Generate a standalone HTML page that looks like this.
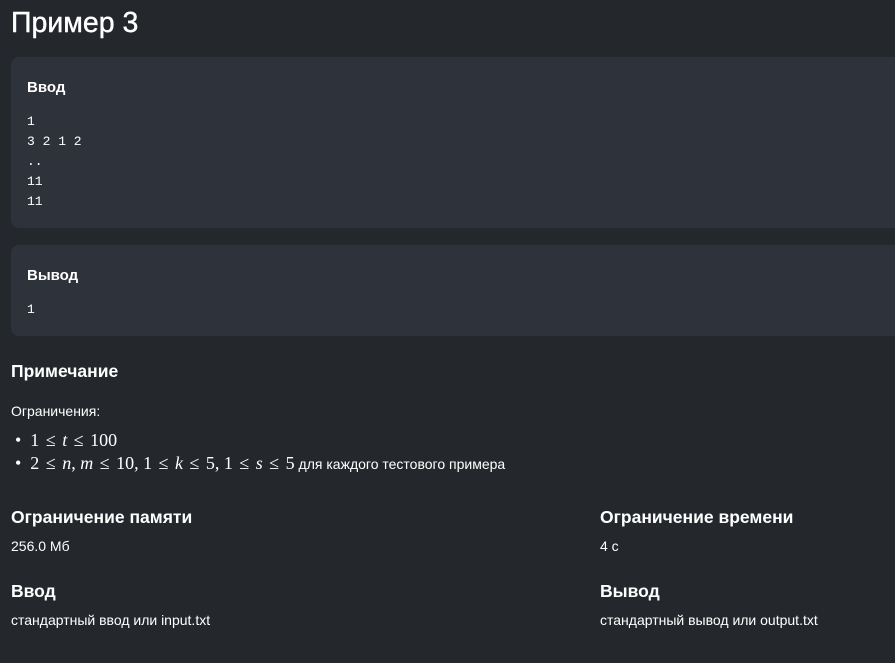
<!DOCTYPE html>
<html><head><meta charset="utf-8"><style>
body{margin:0;width:895px;height:663px;overflow:hidden;background:#24282d;color:#fff;font-family:"Liberation Sans","DejaVu Sans",sans-serif;position:relative}
.a{position:absolute;white-space:nowrap}
.box{position:absolute;left:11px;width:900px;background:#2e323a;border-radius:8px}
.h{font-weight:bold;font-size:15px}
.m{font-family:"Liberation Mono",monospace;font-size:13px;line-height:20px}
.t{font-size:14px}
.h2{font-weight:bold;font-size:17.5px}
.math{font-family:"Liberation Serif","DejaVu Serif",serif;font-size:18px}
.math i{font-style:italic}
.math b{font-weight:normal;padding:0 2px}
</style></head><body>
<div class="a" style="left:11px;top:7px;font-size:28.5px;-webkit-text-stroke:0.4px #fff">Пример 3</div>
<div class="box" style="top:57px;height:171px"></div>
<div class="a h" style="left:27px;top:79px">Ввод</div>
<div class="a m" style="left:27px;top:112px">1<br>3 2 1 2<br>..<br>11<br>11</div>
<div class="box" style="top:245px;height:91px"></div>
<div class="a h" style="left:27px;top:267px">Вывод</div>
<div class="a m" style="left:27px;top:300px">1</div>
<div class="a h2" style="left:11px;top:361px">Примечание</div>
<div class="a t" style="left:11px;top:403px">Ограничения:</div>
<div class="a math" style="left:15px;top:430px">•&nbsp; 1 <b>≤</b> <i>t</i> <b>≤</b> 100</div>
<div class="a math" style="left:15px;top:453px">•&nbsp; 2 <b>≤</b> <i>n</i>, <i>m</i> <b>≤</b> 10, 1 <b>≤</b> <i>k</i> <b>≤</b> 5, 1 <b>≤</b> <i>s</i> <b>≤</b> 5<span class="t" style="font-family:'Liberation Sans',sans-serif"> для каждого тестового примера</span></div>
<div class="a h2" style="left:11px;top:507px">Ограничение памяти</div>
<div class="a t" style="left:11px;top:538px">256.0 Мб</div>
<div class="a h2" style="left:11px;top:581px">Ввод</div>
<div class="a t" style="left:11px;top:612px">стандартный ввод или input.txt</div>
<div class="a h2" style="left:600px;top:507px">Ограничение времени</div>
<div class="a t" style="left:600px;top:538px">4 с</div>
<div class="a h2" style="left:600px;top:581px">Вывод</div>
<div class="a t" style="left:600px;top:612px">стандартный вывод или output.txt</div>
</body></html>
